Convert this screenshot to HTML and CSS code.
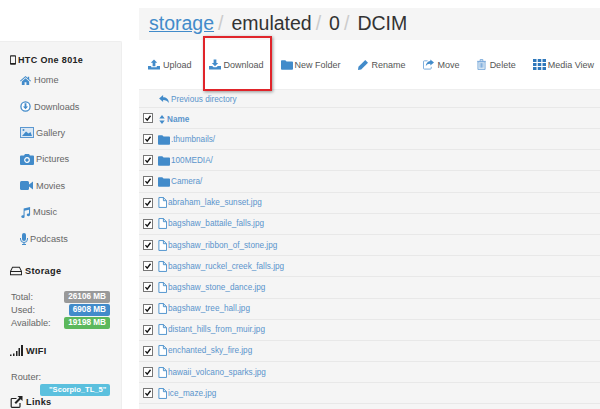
FILE: index.html
```html
<!DOCTYPE html>
<html lang="en">
<head>
<meta charset="utf-8">
<title>DCIM</title>
<link rel="stylesheet" href="styles.css">
</head>
<body>
<svg class="defs" width="0" height="0" aria-hidden="true">
  <symbol id="check" viewBox="0 0 12 12"><path d="M2.2 6.2 4.8 9.2 9.8 2.6" fill="none" stroke="#111" stroke-width="2"/></symbol>
  <symbol id="folder" viewBox="0 0 14 12"><path d="M0 2a1 1 0 0 1 1-1h4l1.5 1.5H13a1 1 0 0 1 1 1V11a1 1 0 0 1-1 1H1a1 1 0 0 1-1-1z" fill="#428bca"/></symbol>
  <symbol id="file" viewBox="0 0 10 12"><path d="M1 .5h5l3.500 3.500v7.500H1z M6 .5V4h3.500" fill="#fff" stroke="#428bca"/></symbol>
</svg>
<div class="app">
  <aside class="sidebar">
    <h4 class="device"><svg class="i-phone" viewBox="0 0 7 11"><path d="M1 0h5a1 1 0 0 1 1 1v9a1 1 0 0 1-1 1H1a1 1 0 0 1-1-1V1a1 1 0 0 1 1-1zm0 1.500V9h5V1.500z" fill="#222"/></svg>HTC One 801e</h4>
    <nav class="nav">
      <a class="nav-item"><svg class="ic" viewBox="0 0 12 10"><path d="M6 0 0 5.200l.7.800L6 1.500 11.300 6l.7-.8-2-1.700V.8H8.500v1.400zM2 6v4h3V7h2v3h3V6L6 2.500z" fill="#428bca"/></svg>Home</a>
      <a class="nav-item"><svg class="ic" viewBox="0 0 12 12"><circle cx="6" cy="6" r="5" fill="#fff" stroke="#428bca" stroke-width="1.400"/><path d="M5 2.500h2V6h1.800L6 9 3.200 6H5z" fill="#428bca"/></svg>Downloads</a>
      <a class="nav-item"><svg class="ic ic-w" viewBox="0 0 14 11"><rect x=".5" y=".5" width="13" height="10" fill="#dbe8f4" stroke="#5b97d0"/><path d="M2 9 6 4.500l2.500 2 2-1.500L12 9z" fill="#428bca"/><circle cx="3.500" cy="3" r="1" fill="#428bca"/></svg>Gallery</a>
      <a class="nav-item"><svg class="ic ic-w" viewBox="0 0 14 11"><path d="M1 1.500h3L5 0h4l1 1.500h3a1 1 0 0 1 1 1V10a1 1 0 0 1-1 1H1a1 1 0 0 1-1-1V2.500a1 1 0 0 1 1-1z" fill="#428bca"/><circle cx="7" cy="6" r="2.300" fill="none" stroke="#fff" stroke-width="1.200"/></svg>Pictures</a>
      <a class="nav-item nav-mov"><svg class="ic ic-w" viewBox="0 0 13 9"><rect width="9" height="9" rx="1.500" fill="#428bca"/><path d="M9 3.500 13 .5v8l-4-3z" fill="#428bca"/></svg>Movies</a>
      <a class="nav-item nav-mus"><svg class="ic" viewBox="0 0 12 12"><path d="M4 1.500 11 0v8.500a1.800 1.500 0 1 1-1.200-1.400V3L5 4v6.500a1.800 1.500 0 1 1-1.200-1.400z" fill="#428bca"/></svg>Music</a>
      <a class="nav-item nav-pod"><svg class="ic ic-n" viewBox="0 0 8 12"><rect x="2" width="4" height="8" rx="2" fill="#428bca"/><path d="M.5 5v1a3.500 3.500 0 0 0 7 0V5M4 9.500V11.500M2 11.500h4" fill="none" stroke="#428bca"/></svg>Podcasts</a>
    </nav>
    <h4 class="section sec-storage"><svg class="i-hdd" viewBox="0 0 14 11"><path d="M3 1h8l2.500 5v4h-13V6zM1 6h12" fill="none" stroke="#222" stroke-width="1.200"/></svg>Storage</h4>
    <dl class="stats">
      <div class="stat"><dt>Total:</dt><dd class="badge gray">26106 MB</dd></div>
      <div class="stat"><dt>Used:</dt><dd class="badge blue">6908 MB</dd></div>
      <div class="stat"><dt>Available:</dt><dd class="badge green">19198 MB</dd></div>
    </dl>
    <h4 class="section sec-wifi"><svg class="i-wifi" viewBox="0 0 13 11"><path d="M0 9.500h1.500V11H0zM3 8.500h1.500V11H3zM6 6h1.500v5H6zM8.500 3H10v8H8.500zM11 0h2v11h-2z" fill="#222"/></svg>WIFI</h4>
    <div class="router">Router:</div>
    <div class="router-row"><span class="badge cyan">"Scorpio_TL_5"</span></div>
    <h4 class="section sec-links"><svg class="i-link" viewBox="0 0 12 12"><path d="M9.500 7v3.500a.8.8 0 0 1-.8.800H1.500a.8.8 0 0 1-.8-.8V3.300a.8.8 0 0 1 .8-.8H6" fill="none" stroke="#222" stroke-width="1.200"/><path d="M7 0h5v5l-1.800-1.800L5.500 8 4 6.500 8.800 1.800z" fill="#222"/></svg>Links</h4>
  </aside>
  <main class="main">
    <h1 class="crumbs"><a class="crumb-link">storage</a><span class="sep">/</span><span class="crumb">emulated</span><span class="sep">/</span><span class="crumb">0</span><span class="sep">/</span><span class="crumb">DCIM</span></h1>
    <div class="toolbar">
      <a class="tool"><svg class="t-ic" viewBox="0 0 13 11"><path d="M6.500 0 10 3.500H8V7.500H5V3.500H3zM0 7h3.500v1.500h6V7H13v4H0z" fill="#428bca"/></svg>Upload</a>
      <a class="tool"><svg class="t-ic" viewBox="0 0 13 11"><path d="M5 0h3v4h2L6.500 7.500 3 4h2zM0 7h3.500l1.500 1.500h3L9.500 7H13v4H0z" fill="#428bca"/></svg>Download</a>
      <a class="tool"><svg class="t-ic t-folder"><use href="#folder"/></svg>New Folder</a>
      <a class="tool"><svg class="t-ic t-pen" viewBox="0 0 11 11"><path d="M8 0 11 3 3.500 10.500 0 11l.5-3.500z" fill="#428bca"/></svg>Rename</a>
      <a class="tool"><svg class="t-ic t-move" viewBox="0 0 12 11"><path d="M5 1.500H1.500a1 1 0 0 0-1 1v7a1 1 0 0 0 1 1H8a1 1 0 0 0 1-1V8" fill="none" stroke="#6fa4d8"/><path d="M8 0l4 3.200L8 6.500V4.700C5.500 4.700 4 5.500 3 7.500 3.200 4.500 5 2 8 1.800z" fill="#428bca"/></svg>Move</a>
      <a class="tool"><svg class="t-ic t-trash" viewBox="0 0 10 12"><path d="M1 3h8v8.500H1zM0 2.500h10M3.500 2.500V.5h3v2M3.500 4.500v5M5 4.500v5M6.500 4.500v5" fill="#dbe8f4" stroke="#6fa4d8" stroke-width=".9"/></svg>Delete</a>
      <a class="tool"><svg class="t-ic t-grid" viewBox="0 0 13 11"><path d="M0 0h3.500v3H0zM4.750 0h3.500v3h-3.500zM9.500 0H13v3H9.500zM0 4h3.500v3H0zM4.750 4h3.500v3h-3.500zM9.500 4H13v3H9.500zM0 8h3.500v3H0zM4.750 8h3.500v3h-3.500zM9.500 8H13v3H9.500z" fill="#2f78bb"/></svg>Media View</a>
    </div>
    <div class="prev"><svg class="i-back" viewBox="0 0 11 9"><path d="M4.500 0v2.500C8 2.500 11 4.500 11 9 9.500 6.500 7.500 5.500 4.500 5.500V8L0 4z" fill="#428bca"/></svg>Previous directory</div>
    <div class="thead">
      <span class="cb"><svg><use href="#check"/></svg></span>
      <svg class="i-sort" viewBox="0 0 6 10"><path d="M3 0l3 4H0zM3 10 0 6h6z" fill="#428bca"/></svg>Name
    </div>
    <ul class="files">
      <li class="row"><span class="cb"><svg><use href="#check"/></svg></span><svg class="r-folder"><use href="#folder"/></svg>.thumbnails/</li>
      <li class="row"><span class="cb"><svg><use href="#check"/></svg></span><svg class="r-folder"><use href="#folder"/></svg>100MEDIA/</li>
      <li class="row"><span class="cb"><svg><use href="#check"/></svg></span><svg class="r-folder"><use href="#folder"/></svg>Camera/</li>
      <li class="row"><span class="cb"><svg><use href="#check"/></svg></span><svg class="r-file"><use href="#file"/></svg>abraham_lake_sunset.jpg</li>
      <li class="row"><span class="cb"><svg><use href="#check"/></svg></span><svg class="r-file"><use href="#file"/></svg>bagshaw_battaile_falls.jpg</li>
      <li class="row"><span class="cb"><svg><use href="#check"/></svg></span><svg class="r-file"><use href="#file"/></svg>bagshaw_ribbon_of_stone.jpg</li>
      <li class="row"><span class="cb"><svg><use href="#check"/></svg></span><svg class="r-file"><use href="#file"/></svg>bagshaw_ruckel_creek_falls.jpg</li>
      <li class="row"><span class="cb"><svg><use href="#check"/></svg></span><svg class="r-file"><use href="#file"/></svg>bagshaw_stone_dance.jpg</li>
      <li class="row"><span class="cb"><svg><use href="#check"/></svg></span><svg class="r-file"><use href="#file"/></svg>bagshaw_tree_hall.jpg</li>
      <li class="row"><span class="cb"><svg><use href="#check"/></svg></span><svg class="r-file"><use href="#file"/></svg>distant_hills_from_muir.jpg</li>
      <li class="row"><span class="cb"><svg><use href="#check"/></svg></span><svg class="r-file"><use href="#file"/></svg>enchanted_sky_fire.jpg</li>
      <li class="row"><span class="cb"><svg><use href="#check"/></svg></span><svg class="r-file"><use href="#file"/></svg>hawaii_volcano_sparks.jpg</li>
      <li class="row"><span class="cb"><svg><use href="#check"/></svg></span><svg class="r-file"><use href="#file"/></svg>ice_maze.jpg</li>
      <li class="row"></li>
    </ul>
    <div class="highlight"></div>
  </main>
</div>
</body>
</html>
```
FILE: styles.css
```css
html, body { margin: 0; padding: 0; height: 100%; overflow: hidden; background: #fff; }
body { font-family: "Liberation Sans", Arial, sans-serif; font-size: 9.2px; color: #555; }
.defs { position: absolute; }
.app { display: flex; gap: 17px; height: 409px; overflow: hidden; }

/* sidebar */
.sidebar { flex: 0 0 122px; box-sizing: border-box; margin-top: 41px; padding: 11px 0 0 10px; background: #f5f5f5; border-radius: 0 2px 0 0; border-top: 1px solid #eee; border-right: 1px solid #eee; overflow: hidden; }
.device, .section { display: flex; align-items: center; margin: 0; font-size: 9.2px; font-weight: bold; letter-spacing: .3px; color: #222; }
.device { height: 14px; font-size: 9px; letter-spacing: .35px; }
.i-phone { width: 6px; height: 10px; margin-right: 2px; }
.nav { display: flex; flex-direction: column; padding-left: 10px; }
.nav-item { display: flex; align-items: center; height: 26.4px; color: #666; }
.ic { width: 11px; height: 11px; margin-right: 3px; }
.ic-w { width: 14px; height: 11px; margin-right: 2px; }
.nav-mov .ic { width: 13px; height: 9px; margin-right: 3px; }
.nav-mus .ic { margin-right: 2px; }
.ic-n { width: 8px; height: 12px; margin-right: 2px; }
.sec-storage { margin-top: 11px; height: 16px; }
.i-hdd { width: 12px; height: 10px; margin-right: 3px; }
.stats { margin: 12px 11px 0 1px; }
.stat { display: flex; justify-content: space-between; align-items: center; height: 13px; color: #666; }
.stat dd { margin: 0; }
.badge { display: inline-block; height: 12px; line-height: 11px; padding: 0 4px; border-radius: 2px; font-size: 8.2px; font-weight: bold; color: #fff; }
.gray { background: #999; }
.blue { background: #428bca; }
.green { background: #5cb85c; }
.cyan { display: block; width: 61px; padding: 0 0 0 9px; background: #5bc0de; font-size: 7.6px; }
.sec-wifi { margin-top: 14px; height: 14px; }
.i-wifi { width: 13px; height: 11px; margin-right: 3px; }
.router { margin: 13px 0 0 1px; height: 12px; line-height: 12px; color: #666; }
.router-row { padding-left: 30px; margin-top: 1px; }
.sec-links { height: 13px; }
.i-link { width: 13px; height: 12px; margin-right: 3px; }

/* main */
.main { position: relative; flex: 1; min-width: 0; padding-top: 8px; }
.crumbs { display: flex; align-items: center; box-sizing: border-box; height: 32px; margin: 0; padding: 0 0 2px 10px; background: #f5f5f5; font-size: 19.500px; font-weight: normal; color: #333; }
.crumb-link { color: #428bca; text-decoration: underline; }
.sep { margin: 0 8px 0 4px; color: #ccc; }
.toolbar { display: flex; align-items: center; height: 49px; padding-left: 9px; font-size: 9px; white-space: nowrap; }
.tool { display: flex; flex: none; align-items: center; margin-right: 17px; color: #555; }
.t-ic { flex: none; width: 12px; height: 11px; margin-right: 3px; }
.t-folder { width: 12px; height: 11px; margin-right: 2px; }
.t-pen { width: 10px; height: 10px; margin-right: 4px; }
.t-move { width: 11px; height: 11px; margin-right: 4px; }
.t-trash { width: 9px; height: 11px; margin-right: 4px; }
.t-grid { width: 13px; margin-right: 2px; }
.prev { display: flex; align-items: center; box-sizing: border-box; height: 18px; padding: 1px 0 0 20px; background: #f5f5f5; border-top: 1px solid #eee; color: #5a94cc; font-size: 8.2px; }
.i-back { width: 10px; height: 8px; margin-right: 2px; }
.thead, .row { display: flex; align-items: center; box-sizing: border-box; background: #f5f5f5; border-top: 1px solid #e8e8e8; color: #5a94cc; font-size: 8.2px; padding-left: 4px; }
.thead { height: 21px; padding-top: 3px; font-weight: bold; }
.thead .cb { margin-top: -3px; }
.files { margin: 0; padding: 0; list-style: none; }
.row { height: 21.200px; }
.cb { display: flex; box-sizing: border-box; width: 10px; height: 10px; margin-right: 5px; background: #fff; border: 1px solid #777; }
.cb svg { width: 8px; height: 8px; }
.i-sort { width: 6px; height: 9px; margin: 0 2px 0 1px; }
.r-folder { width: 12px; height: 11px; margin-right: 1px; }
.r-file { width: 9px; height: 11px; margin-right: 1px; }
.highlight { position: absolute; left: 64px; top: 36px; width: 65px; height: 51px; border: 2px solid #e0242a; box-shadow: 1px 1px 3px rgba(0,0,0,.4); }
```
